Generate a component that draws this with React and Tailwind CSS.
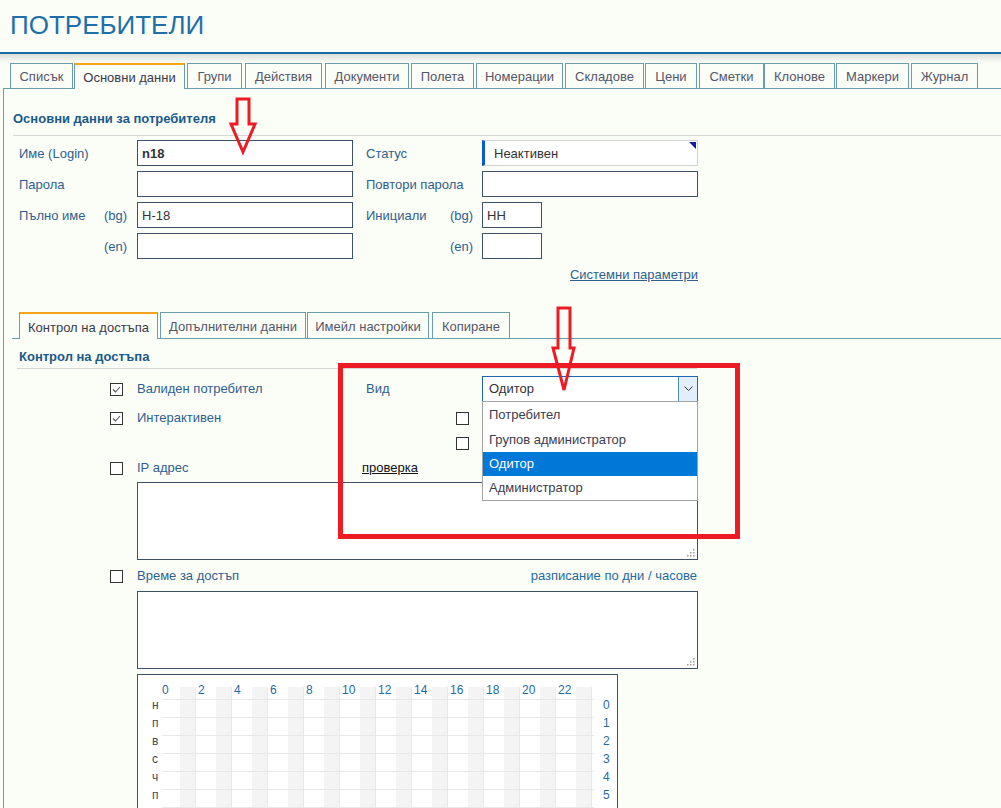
import React from "react";

const mainTabs = [
  { t: "Списък", c: "ml-0 w-[63px]" },
  { t: "Основни данни", c: "ml-[1px] w-[111px]", active: true },
  { t: "Групи", c: "ml-[2px] w-[55px]" },
  { t: "Действия", c: "ml-[3px] w-[77px]" },
  { t: "Документи", c: "ml-[3px] w-[84px]" },
  { t: "Полета", c: "ml-[2px] w-[63px]" },
  { t: "Номерации", c: "ml-[2px] w-[87px]" },
  { t: "Складове", c: "ml-[2px] w-[79px]" },
  { t: "Цени", c: "ml-[1px] w-[52px]" },
  { t: "Сметки", c: "ml-[2px] w-[65px]" },
  { t: "Клонове", c: "ml-0 w-[71px]" },
  { t: "Маркери", c: "ml-[1px] w-[73px]" },
  { t: "Журнал", c: "ml-[2px] w-[67px]" },
];

const subTabs = [
  { t: "Контрол на достъпа", c: "ml-0 w-[139px]", active: true },
  { t: "Допълнителни данни", c: "ml-[2px] w-[146px]" },
  { t: "Имейл настройки", c: "ml-[1px] w-[122px]" },
  { t: "Копиране", c: "ml-[3px] w-[78px]" },
];

function Tab({ t, c, active, h }) {
  return active ? (
    <div
      className={`${c} ${h === 26 ? "h-[27px]" : "h-[26px]"} -mb-px relative z-10 bg-[#fbfdf7] border border-b-0 border-[#6a9dae] border-t-2 border-t-[#f5a31a] pt-[2px] flex items-center justify-center text-[13px] text-[#3a3a4a]`}
    >
      {t}
    </div>
  ) : (
    <div
      className={`${c} ${h === 26 ? "h-[26px]" : "h-[25px]"} border border-b-0 border-[#6a9dae] pt-[2px] flex items-center justify-center text-[13px] text-[#55566a]`}
    >
      {t}
    </div>
  );
}

function Checkbox({ checked }) {
  return (
    <div className="w-[13px] h-[13px] shrink-0 border border-[#333] bg-white flex items-center justify-center">
      {checked && (
        <svg width="11" height="11" viewBox="0 0 11 11">
          <polyline points="2,5.5 4.5,8 9,3" fill="none" stroke="#555" strokeWidth="1.1" />
        </svg>
      )}
    </div>
  );
}

function Grip() {
  return (
    <svg className="absolute right-[2px] bottom-[2px]" width="9" height="9" viewBox="0 0 9 9">
      {[
        [7, 1],
        [4, 4],
        [7, 4],
        [1, 7],
        [4, 7],
        [7, 7],
      ].map(([x, y], i) => (
        <rect key={i} x={x} y={y} width="1.5" height="1.5" fill="#9a9a9a" />
      ))}
    </svg>
  );
}

function Input({ w = "w-[216px]", children, bold }) {
  return (
    <div
      className={`${w} h-[26px] border border-[#3e5066] bg-white px-[4px] pt-px flex items-center text-[13px] text-[#333] ${bold ? "font-bold" : ""}`}
    >
      {children}
    </div>
  );
}

function Label({ text, sub, w }) {
  return (
    <div className={`${w} pt-[2px] flex justify-between text-[13px] text-[#2f5f8f]`}>
      <span>{text}</span>
      <span>{sub}</span>
    </div>
  );
}

const hours = [0, 2, 4, 6, 8, 10, 12, 14, 16, 18, 20, 22];
const days = ["н", "п", "в", "с", "ч", "п"];

export default function App() {
  return (
    <div className="relative w-[1001px] h-[808px] overflow-hidden bg-[#fbfdf7] font-['Liberation_Sans',Arial,sans-serif]">
      {/* Header */}
      <div className="h-[54px] pl-[10px] pb-[2px] flex items-center border-b-2 border-[#1a6aa5]">
        <h1 className="text-[26px] leading-none text-[#1f6fa8]">ПОТРЕБИТЕЛИ</h1>
      </div>

      {/* Main tabs */}
      <div className="pt-[9px] bg-[linear-gradient(to_bottom,#dcdeda,#fbfdf7_9px)]">
        <div className="flex items-end pl-[10px]">
          {mainTabs.map((tb) => (
            <Tab key={tb.t} {...tb} />
          ))}
        </div>
      </div>

      {/* Panel */}
      <div className="ml-[3px] border-l border-t border-[#6a9dae] h-[800px]">
        <div className="ml-[9px] pt-[22px] pb-[8px] border-b border-[#d6d6d6] font-bold text-[13px] leading-[16px] text-[#1a5a8a]">
          Основни данни за потребителя
        </div>

        <div className="pl-[15px] pt-[4px] flex flex-col gap-[5px]">
          <div className="flex items-center">
            <Label text="Име (Login)" w="w-[118px] pr-[10px]" />
            <Input bold>n18</Input>
            <Label text="Статус" w="w-[116px] pr-[9px] ml-[13px]" />
            <div className="relative w-[216px] h-[26px] border border-[#d2d2d2] border-l-[3px] border-l-[#0d5bc6] bg-white pl-[9px] pt-px flex items-center text-[13px] text-[#333]">
              Неактивен
              <svg className="absolute right-[1px] top-[1px]" width="7" height="7" viewBox="0 0 7 7">
                <polygon points="0,0 7,0 7,7" fill="#1818a8" />
              </svg>
            </div>
          </div>
          <div className="flex items-center">
            <Label text="Парола" w="w-[118px] pr-[10px]" />
            <Input />
            <Label text="Повтори парола" w="w-[116px] pr-[9px] ml-[13px]" />
            <Input />
          </div>
          <div className="flex items-center">
            <Label text="Пълно име" sub="(bg)" w="w-[118px] pr-[10px]" />
            <Input>H-18</Input>
            <Label text="Инициали" sub="(bg)" w="w-[116px] pr-[9px] ml-[13px]" />
            <Input w="w-[60px]">HH</Input>
          </div>
          <div className="flex items-center">
            <Label text="" sub="(en)" w="w-[118px] pr-[10px]" />
            <Input />
            <Label text="" sub="(en)" w="w-[116px] pr-[9px] ml-[13px]" />
            <Input w="w-[60px]" />
          </div>
          <div className="w-[679px] text-right mt-[3px] text-[13px] leading-[16px]">
            <span className="underline text-[#2f5f8f]">Системни параметри</span>
          </div>
        </div>

        {/* Sub tabs */}
        <div className="mt-[29px] ml-[8px] pl-[7px] flex items-end border-b border-[#6a9dae]">
          {subTabs.map((tb) => (
            <Tab key={tb.t} {...tb} h={26} />
          ))}
        </div>

        <div className="ml-[13px] w-[680px] pl-[2px] pt-[10px] pb-[3px] border-b border-[#d6d6d6] font-bold text-[13px] leading-[16px] text-[#1a5a8a]">
          Контрол на достъпа
        </div>

        <div className="pl-[106px] text-[13px] text-[#2f5f8f]">
          {/* Row A */}
          <div className="mt-[7px] h-[26px] flex items-center">
            <div className="w-[256px] flex items-center">
              <Checkbox checked />
              <span className="ml-[14px]">Валиден потребител</span>
            </div>
            <div className="w-[116px]">Вид</div>
            <div className="relative w-[216px] h-[26px] border border-[#1f65b0] bg-white flex items-center text-[#333]">
              <span className="pl-[6px] flex-1">Одитор</span>
              <div className="w-[19px] h-full bg-[#e1eefb] border-l border-[#4a90d9] flex items-center justify-center">
                <svg width="9" height="6" viewBox="0 0 9 6">
                  <polyline points="0.5,0.5 4.5,4.5 8.5,0.5" fill="none" stroke="#333" strokeWidth="1" />
                </svg>
              </div>
              {/* dropdown list */}
              <div className="absolute left-[-1px] top-full w-[216px] z-20 bg-white border border-[#a3a3a3] text-[13px] text-[#3d3d4d]">
                <div className="h-[25px] pl-[6px] flex items-center">Потребител</div>
                <div className="h-[25px] pl-[6px] flex items-center">Групов администратор</div>
                <div className="h-[24px] pl-[6px] flex items-center bg-[#0078d7] text-white">Одитор</div>
                <div className="h-[24px] pl-[6px] flex items-center">Администратор</div>
              </div>
            </div>
          </div>
          {/* Row B */}
          <div className="mt-[4px] h-[24px] flex items-center">
            <div className="w-[346px] flex items-center">
              <Checkbox checked />
              <span className="ml-[14px]">Интерактивен</span>
            </div>
            <Checkbox />
          </div>
          {/* Row C */}
          <div className="mt-px h-[24px] flex items-center">
            <div className="w-[346px]" />
            <Checkbox />
          </div>
          {/* Row D */}
          <div className="mt-px h-[24px] flex items-center">
            <div className="w-[252px] flex items-center">
              <Checkbox />
              <span className="ml-[14px]">IP адрес</span>
            </div>
            <span className="underline text-[#111]">проверка</span>
          </div>
          <div className="relative ml-[27px] mt-[2px] w-[561px] h-[78px] border border-[#3e5066] bg-white">
            <Grip />
          </div>
          {/* Row E */}
          <div className="mt-[6px] h-[20px] w-[587px] flex items-center justify-between">
            <div className="flex items-center">
              <Checkbox />
              <span className="ml-[14px]">Време за достъп</span>
            </div>
            <span className="text-[#1f6aa0]">разписание по дни / часове</span>
          </div>
          <div className="relative ml-[27px] mt-[5px] w-[561px] h-[78px] border border-[#3e5066] bg-white">
            <Grip />
          </div>

          {/* Schedule grid */}
          <div className="ml-[27px] mt-[5px] w-[481px] h-[200px] border border-[#3e5066] bg-white flex pt-[8px] text-[12px]">
            <div className="w-[24px] pl-[14px] text-[#3a4a5a]">
              <div className="h-[16px]" />
              {days.map((d, i) => (
                <div key={i} className="h-[18px] leading-[12px]">
                  {d}
                </div>
              ))}
            </div>
            <div className="w-[432px] bg-[linear-gradient(to_right,transparent_18px,#f4f4f4_18px,#f4f4f4_33px,#e8e8e8_33px,#e8e8e8_34px,transparent_34px)] bg-[length:36px_calc(100%-4px)] bg-[position:0_4px] bg-repeat-x h-[160px]">
              <div className="h-[16px] flex text-[#1f6aa0] leading-[14px]">
                {hours.map((h) => (
                  <div key={h} className="w-[36px]">
                    {h}
                  </div>
                ))}
              </div>
              {[0, 1, 2, 3, 4, 5, 6].map((i) => (
                <div key={i} className="h-[18px] border-t border-[#e8e8e8]" />
              ))}
            </div>
            <div className="pl-[9px] text-[#1f6aa0]">
              <div className="h-[16px]" />
              {[0, 1, 2, 3, 4, 5].map((n) => (
                <div key={n} className="h-[18px] leading-[12px]">
                  {n}
                </div>
              ))}
            </div>
          </div>
        </div>
      </div>

      {/* Red annotations */}
      <svg
        className="absolute left-0 top-0 pointer-events-none z-50"
        width="1001"
        height="808"
        viewBox="0 0 1001 808"
      >
        <rect x="340.5" y="365.5" width="397" height="171" fill="none" stroke="#ed1c24" strokeWidth="5" />
        <polygon
          points="237,99 249,99 249,124 255,124 243,152 231,124 237,124"
          fill="none"
          stroke="#ed1c24"
          strokeWidth="3"
          strokeLinejoin="miter"
        />
        <polygon
          points="558,308 570,308 570,348 574,348 564,390 553,348 558,348"
          fill="none"
          stroke="#ed1c24"
          strokeWidth="3"
          strokeLinejoin="miter"
        />
      </svg>
    </div>
  );
}
